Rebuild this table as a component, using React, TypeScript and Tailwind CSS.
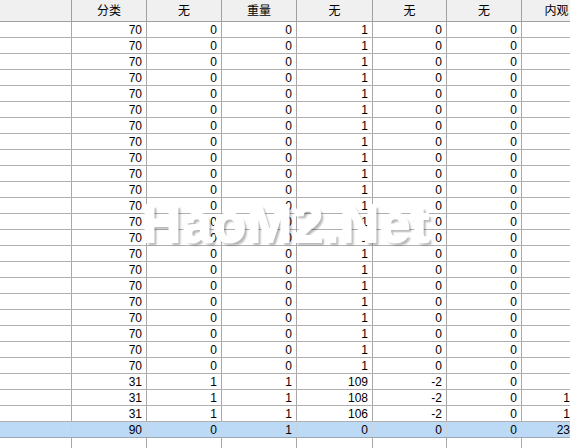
import React from "react";

const widths = ["w-[72px]", "w-[75px]", "w-[75px]", "w-[75px]", "w-[76px]", "w-[74px]", "w-[75px]", "w-[75px]"];
const headers = ["", "分类", "无", "重量", "无", "无", "无", "内观"];

type Row = { v: string[]; sel?: boolean };

const rows: Row[] = [];
for (let i = 0; i < 22; i++) rows.push({ v: ["", "70", "0", "0", "1", "0", "0", ""] });
rows.push({ v: ["", "31", "1", "1", "109", "-2", "0", ""] });
rows.push({ v: ["", "31", "1", "1", "108", "-2", "0", "1"] });
rows.push({ v: ["", "31", "1", "1", "106", "-2", "0", "1"] });
rows.push({ v: ["", "90", "0", "1", "0", "0", "0", "23"], sel: true });

export default function App() {
  return (
    <div className="relative w-[570px] h-[448px] overflow-hidden bg-white text-[12px] text-black font-['Liberation_Sans','Noto_Sans_CJK_SC',sans-serif]">
      <div className="w-[600px]">
        <div className="flex h-[22px] bg-[#f0f0f0] border-b border-[#a0a0a0]">
          {headers.map((h, i) => (
            <div key={i} className={`${widths[i]} shrink-0 border-r border-[#a0a0a0] flex items-center justify-center pt-[1px] leading-none text-[12px] ${i === 7 ? "pr-[5px]" : ""}`}>
              {h}
            </div>
          ))}
        </div>
        {rows.map((r, ri) => (
          <div key={ri} className={`flex h-[16px] border-b ${r.sel ? "bg-[#bcdaf6] border-[#9aa8b8]" : "border-[#b0b0b0]"}`}>
            {r.v.map((c, ci) => (
              <div
                key={ci}
                className={`${widths[ci]} shrink-0 border-r ${r.sel ? "border-[#c8d4e0]" : "border-[#a8a8a8]"} flex items-center justify-end leading-none ${ci === 7 ? "pr-[26px]" : "pr-[4px]"}`}
              >
                {c}
              </div>
            ))}
          </div>
        ))}
        <div className="flex h-[20px]">
          {headers.map((_, i) => (
            <div key={i} className={`${widths[i]} shrink-0 border-r border-[#a8a8a8]`} />
          ))}
        </div>
      </div>
      <div className="absolute left-[142px] top-[196px] text-[54px] font-bold text-white leading-none tracking-[1px] select-none font-['Liberation_Sans',Arial,sans-serif] [-webkit-text-stroke:2px_white] [text-shadow:3px_3px_2px_rgba(0,0,0,0.28)]">
        HaoM2.Net
      </div>
    </div>
  );
}
